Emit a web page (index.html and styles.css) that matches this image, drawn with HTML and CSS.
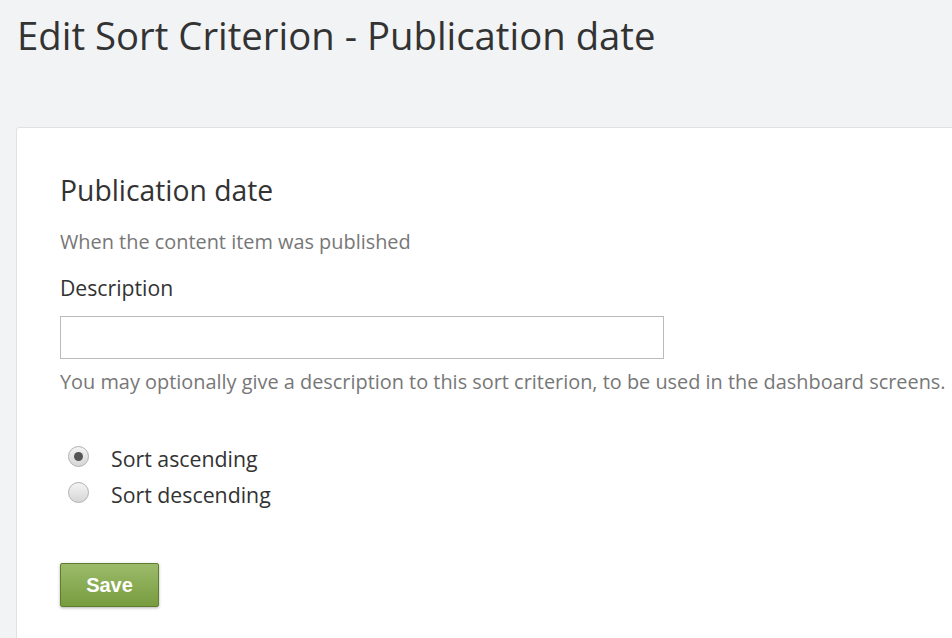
FILE: index.html
```html
<!DOCTYPE html>
<html>
<head>
<meta charset="utf-8">
<link rel="stylesheet" href="styles.css">
</head>
<body>
<h1 class="page-title">Edit Sort Criterion - Publication date</h1>
<div class="card">
  <h2 class="card-title">Publication date</h2>
  <p class="hint">When the content item was published</p>
  <label class="label" for="desc">Description</label>
  <input class="text-input" id="desc" type="text">
  <p class="hint help">You may optionally give a description to this sort criterion, to be used in the dashboard screens.</p>
  <div class="radios">
    <label class="radio-row"><span class="radio checked"></span><span>Sort ascending</span></label>
    <label class="radio-row"><span class="radio"></span><span>Sort descending</span></label>
  </div>
  <button class="save">Save</button>
</div>
</body>
</html>
```
FILE: styles.css
```css
html, body {
  margin: 0;
  padding: 0;
  background: #f2f3f5;
  font-family: "Open Sans", "Noto Sans", sans-serif;
  color: #333;
  overflow: hidden;
}
.page-title {
  margin: 0;
  padding: 12px 0 0 17px;
  font-weight: 400;
  font-size: 38.3px;
  line-height: 46px;
  color: #333;
  letter-spacing: 0;
}
.card {
  margin: 69px 0 0 16px;
  width: 1000px;
  height: 600px;
  background: #fff;
  border: 1px solid #e0e1e3;
  border-radius: 3px;
  padding: 44px 0 0 43px;
  box-sizing: border-box;
}
.card-title {
  margin: 0;
  font-weight: 400;
  font-size: 28.3px;
  line-height: 36px;
  color: #333;
}
.hint {
  margin: 0;
  font-size: 19.9px;
  color: #777;
}
.card-title + .hint {
  margin-top: 21px;
  line-height: 26px;
}
.label {
  display: block;
  margin-top: 20px;
  font-size: 21.2px;
  line-height: 26px;
  color: #333;
}
.text-input {
  display: block;
  margin-top: 15px;
  width: 604px;
  height: 43px;
  box-sizing: border-box;
  border: 1px solid #bbb;
  border-radius: 0;
  outline: none;
}
.help {
  margin-top: 9px;
  line-height: 28px;
}
.radios {
  margin-top: 50px;
  display: flex;
  flex-direction: column;
  gap: 10px;
}
.radio-row {
  display: flex;
  align-items: center;
  gap: 22px;
  font-size: 21.3px;
  line-height: 26px;
  color: #333;
  padding-left: 8px;
}
.radio {
  width: 21px;
  height: 21px;
  box-sizing: border-box;
  border-radius: 50%;
  border: 1px solid #b0b0b0;
  background: linear-gradient(#f4f4f4, #d6d6d6);
  position: relative;
  margin-top: -6px;
}
.radio.checked::after {
  content: "";
  position: absolute;
  left: 5px;
  top: 5px;
  width: 9px;
  height: 9px;
  border-radius: 50%;
  background: #555;
}
.save {
  margin-top: 55px;
  width: 99px;
  height: 44px;
  border: 1px solid #5e7d2e;
  border-radius: 2px;
  background: linear-gradient(#9cbb6a, #779c3f);
  color: #fff;
  font-family: "Liberation Sans", Arial, sans-serif;
  font-weight: 700;
  font-size: 20px;
  box-shadow: 0 1px 3px rgba(0,0,0,0.3);
}
```
